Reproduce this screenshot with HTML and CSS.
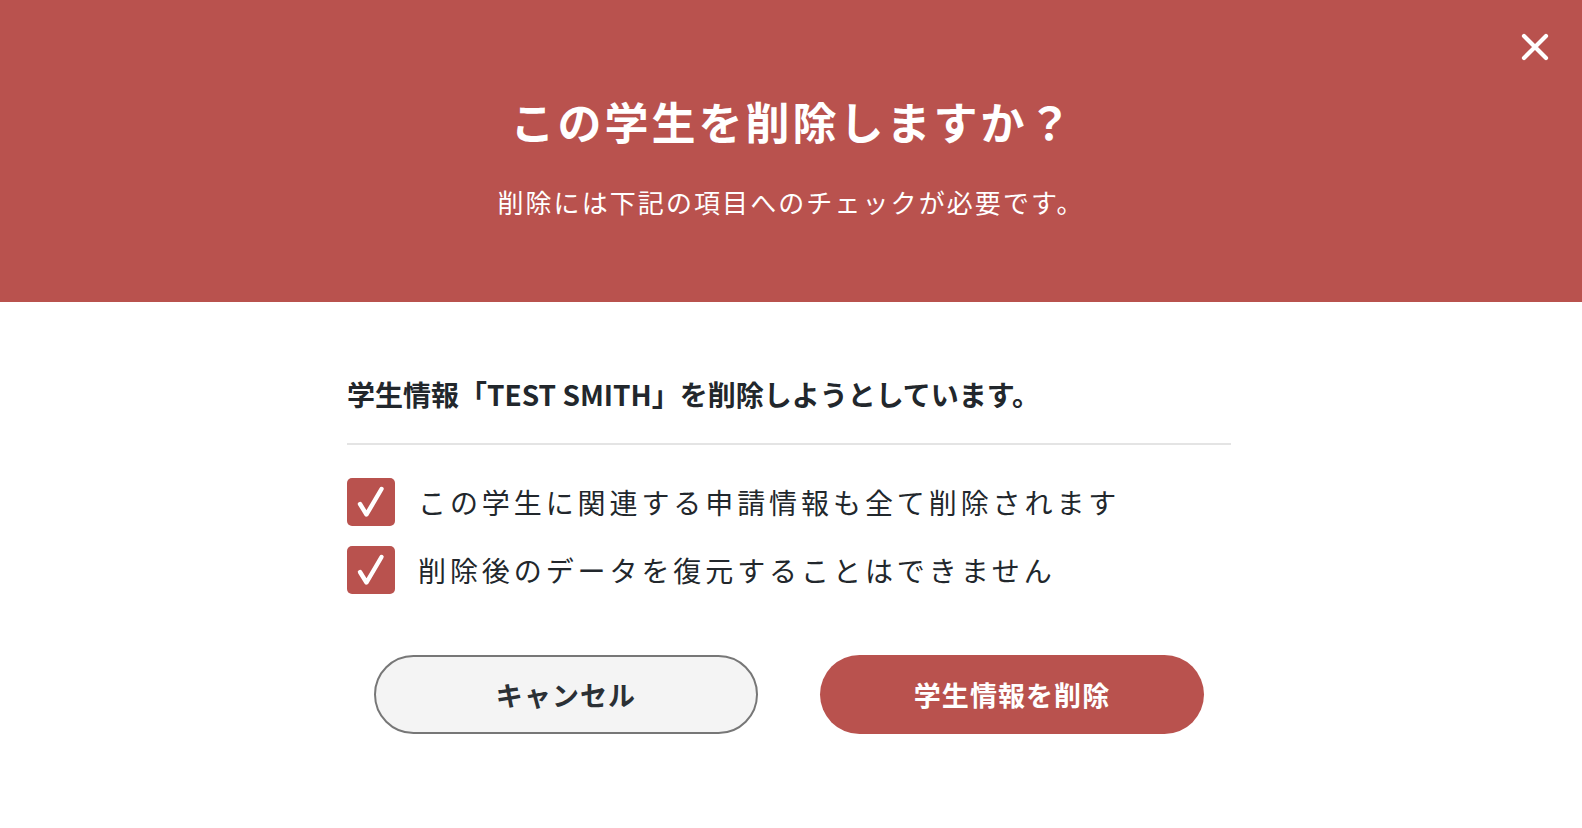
FILE: index.html
```html
<!DOCTYPE html>
<html lang="ja">
<head>
  <meta charset="UTF-8" />
  <meta name="viewport" content="width=device-width, initial-scale=1.0" />
  <title>学生情報の削除</title>
  <link rel="stylesheet" href="styles.css">
</head>
<body>
  <div class="modal">
    <header class="modal-head">
      <button type="button" class="close" aria-label="閉じる">
        <svg viewBox="0 0 28 28" width="28" height="28">
          <path d="M3 3 L25 25 M25 3 L3 25" stroke="#fff" stroke-width="4.2" stroke-linecap="round" fill="none"/>
        </svg>
      </button>
      <h1 class="title">この学生を削除しますか？</h1>
      <p class="lead">削除には下記の項目へのチェックが必要です。</p>
    </header>

    <div class="modal-body">
      <p class="target">学生情報「TEST SMITH」を削除しようとしています。</p>

      <ul class="checks">
        <li>
          <span class="box">
            <svg viewBox="0 0 48 48" width="48" height="48">
              <path d="M13 26 L19.5 36.5 L34.5 11" stroke="#fff" stroke-width="4.4" stroke-linecap="round" stroke-linejoin="round" fill="none"/>
            </svg>
          </span>
          この学生に関連する申請情報も全て削除されます
        </li>
        <li>
          <span class="box">
            <svg viewBox="0 0 48 48" width="48" height="48">
              <path d="M13 26 L19.5 36.5 L34.5 11" stroke="#fff" stroke-width="4.4" stroke-linecap="round" stroke-linejoin="round" fill="none"/>
            </svg>
          </span>
          削除後のデータを復元することはできません
        </li>
      </ul>

      <div class="actions">
        <button type="button" class="btn btn-cancel">キャンセル</button>
        <button type="button" class="btn btn-delete">学生情報を削除</button>
      </div>
    </div>
  </div>
</body>
</html>
```

FILE: styles.css
```css
body {
  margin: 0;
  font-family: "Noto Sans CJK JP", "Noto Sans", sans-serif;
  background: #fff;
  color: #22272c;
}
.modal-head {
  position: relative;
  background-color: #b9524e;
  color: #fff;
  text-align: center;
  padding: 90px 0 82px;
}
.close {
  position: absolute;
  top: 33px;
  right: 33px;
  padding: 0;
  border: none;
  background: none;
  cursor: pointer;
  line-height: 0;
}
.title {
  margin: 0;
  font-size: 44px;
  line-height: 62px;
  font-weight: 700;
  letter-spacing: 3px;
  text-indent: 3px;
}
.lead {
  margin: 32px 0 0;
  font-size: 26px;
  line-height: 36px;
  letter-spacing: 0.08em;
}
.modal-body {
  width: 884px;
  margin-left: calc(50% - 444px);
  padding-top: 72px;
}
.target {
  margin: 0;
  padding: 0 0 29px;
  font-size: 28px;
  line-height: 40px;
  font-weight: 700;
  border-bottom: 2px solid #e4e4e4;
}
.checks {
  list-style: none;
  margin: 33px 0 0;
  padding: 0;
  display: flex;
  flex-direction: column;
  gap: 20px;
}
.checks li {
  display: flex;
  align-items: center;
  gap: 23px;
  font-size: 28px;
  letter-spacing: 0.14em;
  line-height: 48px;
}
.box {
  width: 48px;
  height: 48px;
  flex: none;
  background: #b9524e;
  border-radius: 5px;
  line-height: 0;
}
.actions {
  display: flex;
  justify-content: center;
  gap: 62px;
  margin-top: 61px;
}
.btn {
  width: 384px;
  height: 79px;
  border-radius: 40px;
  font-family: inherit;
  font-size: 27px;
  font-weight: 700;
  letter-spacing: 0.04em;
  cursor: pointer;
}
.btn-cancel {
  background: #f4f4f4;
  border: 2px solid #777;
  color: #2b3035;
}
.btn-delete {
  background: #b9524e;
  border: none;
  color: #fff;
}
```
